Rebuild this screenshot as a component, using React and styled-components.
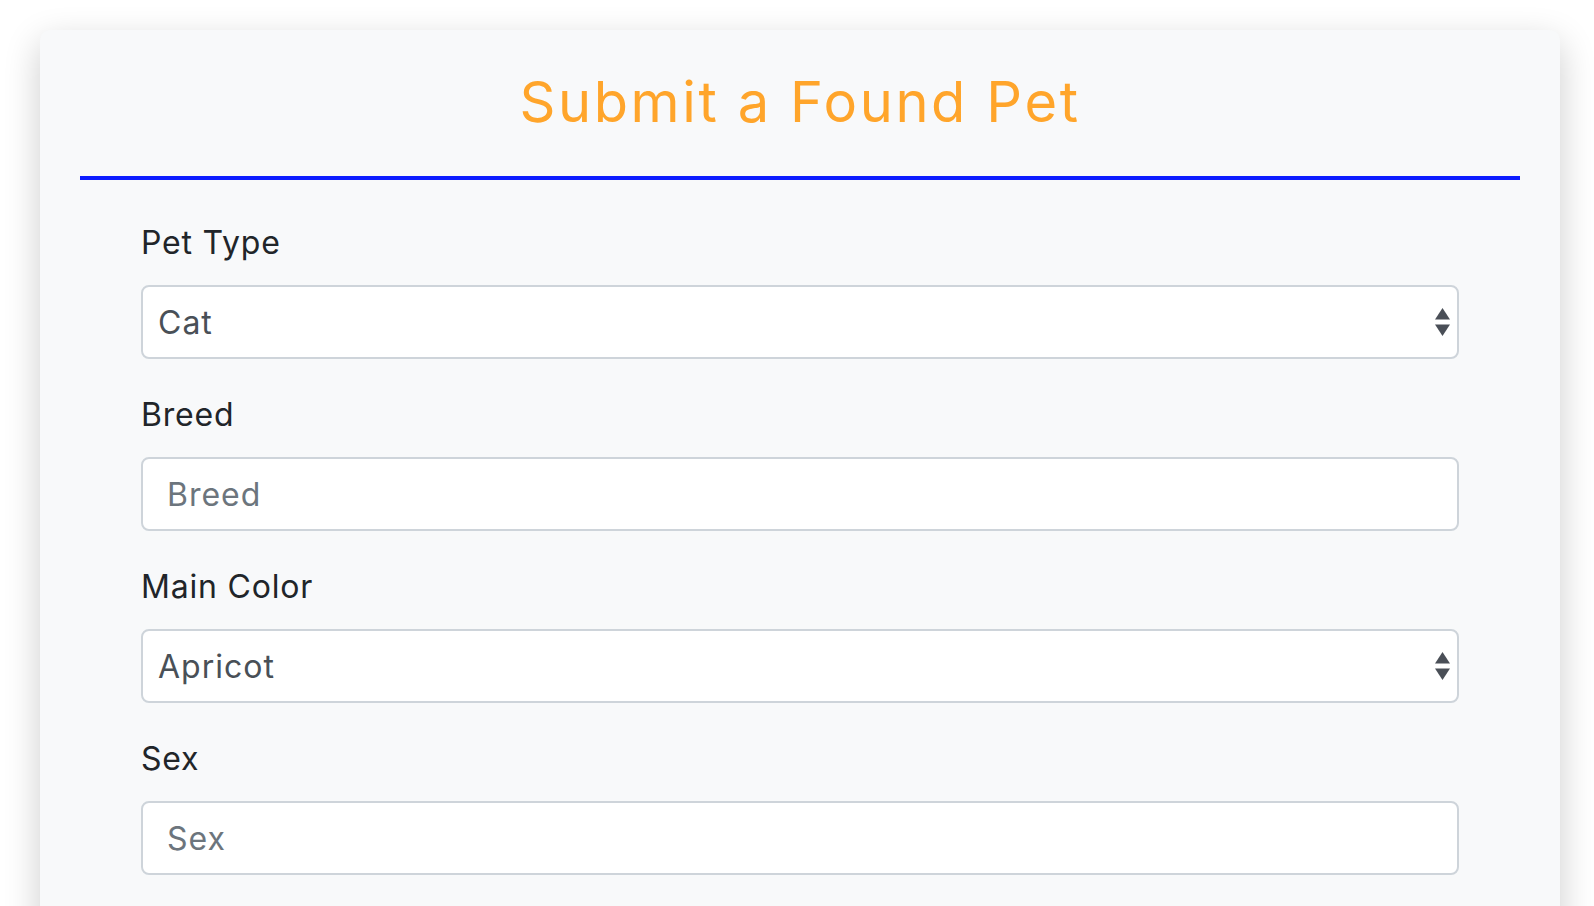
import React from "react";
import styled, { createGlobalStyle } from "styled-components";

const FONT = `Inter, "Open Sans", "Liberation Sans", sans-serif`;

const GlobalStyle = createGlobalStyle`
  html, body {
    margin: 0;
    padding: 0;
    background: #ffffff;
    font-family: ${FONT};
  }
  * { box-sizing: border-box; }
`;

const Page = styled.div`
  padding: 30px 34px 0 40px;
`;

const Card = styled.div`
  background: #f8f9fa;
  border-radius: 10px;
  box-shadow: 0 12px 36px rgba(0, 0, 0, 0.2);
  padding: 0 40px 40px;
`;

const Header = styled.div`
  padding: 39px 0 40px;
  border-bottom: 4px solid #0c1cff;
  display: flex;
  justify-content: center;
`;

const Title = styled.h1`
  margin: 0;
  font-family: ${FONT};
  font-weight: 400;
  font-size: 56px;
  line-height: 1.2;
  letter-spacing: 2.6px;
  color: #ffa52b;
`;

const Form = styled.form`
  padding: 39px 61px 0;
  display: flex;
  flex-direction: column;
`;

const Group = styled.div`
  display: flex;
  flex-direction: column;
  margin-bottom: 32px;
`;

const Label = styled.label`
  font-size: 32px;
  line-height: 48px;
  letter-spacing: 0.8px;
  color: #212529;
  margin-bottom: 18px;
`;

const fieldBase = `
  width: 100%;
  height: 74px;
  border: 2px solid #ced4da;
  border-radius: 8px;
  background: #ffffff;
  font-family: ${FONT};
  font-size: 32px;
  letter-spacing: 1px;
  color: #495057;
  outline: none;
`;

const TextInput = styled.input`
  ${fieldBase}
  padding: 0 24px;
  &::placeholder {
    color: #6c757d;
    opacity: 1;
  }
`;

const SelectWrap = styled.div`
  position: relative;
  display: flex;
`;

const Select = styled.select`
  ${fieldBase}
  appearance: none;
  -webkit-appearance: none;
  padding: 0 40px 0 15px;
`;

const Arrows = styled.svg`
  position: absolute;
  right: 9px;
  top: 50%;
  transform: translateY(-50%);
  pointer-events: none;
`;

function SelectArrows() {
  return (
    <Arrows width="15" height="28" viewBox="0 0 15 28">
      <path d="M7.5 0 L15 11.5 L0 11.5 Z" fill="#4a4f57" />
      <path d="M0 16.5 L15 16.5 L7.5 28 Z" fill="#4a4f57" />
    </Arrows>
  );
}

function SelectField({ id, label, value, options }) {
  return (
    <Group>
      <Label htmlFor={id}>{label}</Label>
      <SelectWrap>
        <Select id={id} defaultValue={value}>
          {options.map((o) => (
            <option key={o}>{o}</option>
          ))}
        </Select>
        <SelectArrows />
      </SelectWrap>
    </Group>
  );
}

function TextField({ id, label }) {
  return (
    <Group>
      <Label htmlFor={id}>{label}</Label>
      <TextInput id={id} type="text" placeholder={label} />
    </Group>
  );
}

export default function App() {
  return (
    <Page>
      <GlobalStyle />
      <Card>
        <Header>
          <Title>Submit a Found Pet</Title>
        </Header>
        <Form onSubmit={(e) => e.preventDefault()}>
          <SelectField
            id="petType"
            label="Pet Type"
            value="Cat"
            options={["Cat", "Dog", "Bird", "Other"]}
          />
          <TextField id="breed" label="Breed" />
          <SelectField
            id="mainColor"
            label="Main Color"
            value="Apricot"
            options={["Apricot", "Black", "Brown", "Gray", "White"]}
          />
          <TextField id="sex" label="Sex" />
        </Form>
      </Card>
    </Page>
  );
}
